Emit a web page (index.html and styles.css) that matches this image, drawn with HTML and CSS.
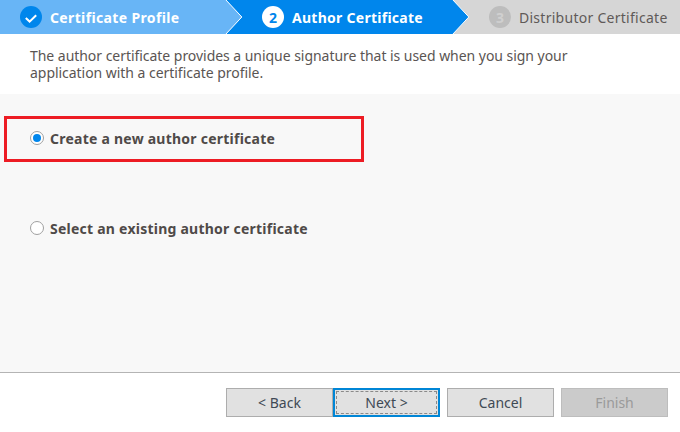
FILE: index.html
```html
<!DOCTYPE html>
<html lang="en">
<head>
<meta charset="utf-8">
<title>Author Certificate</title>
<link rel="stylesheet" href="styles.css">
</head>
<body>
<div class="wizard">
  <nav class="steps">
    <div class="step step-done">
      <span class="badge badge-done">
        <svg width="14" height="14" viewBox="0 0 14 14"><path d="M1.8 8 5.6 11.6 12.2 5.2" fill="none" stroke="#fff" stroke-width="2"/></svg>
      </span>
      <span class="step-label">Certificate Profile</span>
      <svg class="arrow" width="18" height="34" viewBox="0 0 18 34"><path d="M0 0H1L17 17 1 34H0Z" fill="#68b5f6"/><path d="M0.5 -0.5 16.8 17 0.5 34.5" fill="none" stroke="#fff" stroke-width="1"/></svg>
    </div>
    <div class="step step-active">
      <span class="badge badge-active">2</span>
      <span class="step-label">Author Certificate</span>
      <svg class="arrow" width="18" height="34" viewBox="0 0 18 34"><path d="M0 0H1L17 17 1 34H0Z" fill="#0086ec"/><path d="M0.5 -0.5 16.8 17 0.5 34.5" fill="none" stroke="#fff" stroke-width="1"/></svg>
    </div>
    <div class="step step-todo">
      <span class="badge badge-todo">3</span>
      <span class="step-label">Distributor Certificate</span>
    </div>
  </nav>
  <p class="intro">The author certificate provides a unique signature that is used when you sign your application with a certificate profile.</p>
  <main class="content">
    <div class="option-box">
      <label class="option"><span class="radio radio-on"></span><span>Create a new author certificate</span></label>
    </div>
    <label class="option option-second"><span class="radio"></span><span>Select an existing author certificate</span></label>
  </main>
  <footer class="footer">
    <div class="btn-pair">
      <button class="btn">&lt; Back</button>
      <button class="btn btn-focus"><span class="focus-ring">Next &gt;</span></button>
    </div>
    <button class="btn">Cancel</button>
    <button class="btn btn-disabled">Finish</button>
  </footer>
</div>
</body>
</html>
```

FILE: styles.css
```css
* { box-sizing: border-box; }
html, body { margin: 0; padding: 0; }
body {
  width: 680px;
  height: 432px;
  overflow: hidden;
  background: #fff;
  font-family: "Noto Sans", "Open Sans", sans-serif;
  color: #4f4a48;
}
.wizard { display: flex; flex-direction: column; height: 432px; }

.steps { display: flex; height: 34px; flex: none; font-size: 14px; font-weight: 700; }
.step { position: relative; display: flex; align-items: center; height: 34px; }
.step-done { width: 225px; padding-left: 20px; background: #68b5f6; color: #fff; }
.step-active { width: 227px; padding-left: 37px; background: #0086ec; color: #fff; }
.step-todo { flex: 1; padding-left: 37px; background: #d6d6d6; color: #5f5a58; font-weight: 400; }
.badge {
  flex: none;
  display: flex;
  align-items: center;
  justify-content: center;
  width: 22px;
  height: 22px;
  border-radius: 50%;
  margin-right: 8px;
  font-size: 14px;
  font-weight: 700;
}
.badge-done { background: #0086ec; }
.badge-active { background: #fff; color: #0086ec; }
.badge-todo { background: #bdbdbd; color: #d0d0d0; }
.step-label { white-space: nowrap; letter-spacing: 0.27px; }
.step-done .step-label { letter-spacing: 0.36px; }
.arrow { position: absolute; left: 100%; top: 0; z-index: 1; }

.intro {
  flex: none;
  height: 60px;
  margin: 0;
  padding: 13px 60px 0 30px;
  font-size: 14px;
  letter-spacing: -0.04px;
  line-height: 17px;
  color: #5a5553;
}

.content { flex: 1; background: #f8f8f8; padding-top: 22px; border-bottom: 1px solid #b4b4b4; }
.option-box { width: 360px; height: 46px; margin-left: 4px; border: 3px solid #ed1c24; padding: 9px 0 0 23px; }
.option { display: flex; align-items: center; gap: 6px; font-size: 14px; font-weight: 700; letter-spacing: 0.24px; color: #4f4a48; height: 20px; }
.option-second { margin: 56px 0 0 30px; }
.radio { flex: none; width: 14px; height: 14px; border-radius: 50%; background: #fff; border: 1px solid #a0a0a0; position: relative; }
.radio-on::after { content: ""; position: absolute; left: 2px; top: 2px; width: 8px; height: 8px; border-radius: 50%; background: #0086ec; }

.footer { flex: none; height: 59px; display: flex; gap: 7px; padding: 15px 12px 0 226px; align-items: flex-start; }
.btn-pair { display: flex; }
.btn {
  width: 107px;
  height: 29px;
  padding: 0;
  background: #e1e1e1;
  border: 1px solid #adadad;
  font: 400 14px "Noto Sans", "Open Sans", sans-serif;
  color: #3f4a55;
}
.btn-focus { border: 2px solid #0086d6; padding: 1px; }
.focus-ring { display: flex; align-items: center; justify-content: center; height: 100%; border: 1px dashed #8a8a8a; }
.btn-disabled { background: #cbcbcb; border-color: #bdbdbd; color: #9a9a9a; }
```
